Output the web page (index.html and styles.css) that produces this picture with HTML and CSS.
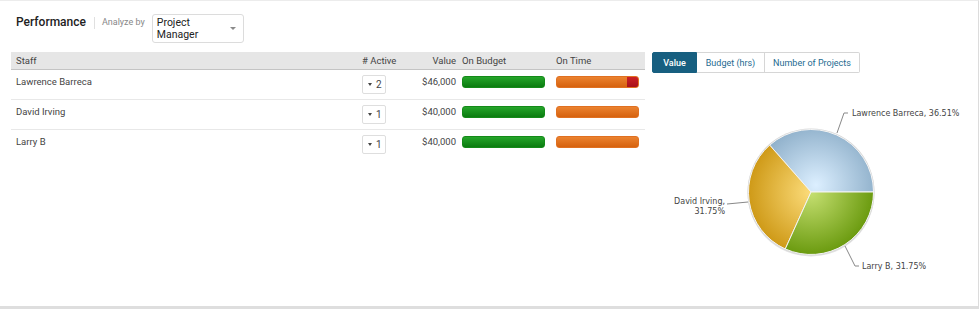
FILE: index.html
```html
<!DOCTYPE html>
<html>
<head>
<meta charset="utf-8">
<link rel="stylesheet" href="styles.css">
</head>
<body>
<div class="panel">
  <div class="head">
    <h1 class="title">Performance</h1>
    <span class="sep"></span>
    <span class="analyze">Analyze by</span>
    <div class="select">
      <span class="select-text">Project<br>Manager</span>
      <span class="caret"></span>
    </div>
  </div>
  <div class="content">
    <div class="grid">
      <div class="row hrow">
        <div class="cell c-staff">Staff</div>
        <div class="cell c-active">#&nbsp;Active</div>
        <div class="cell c-value">Value</div>
        <div class="cell c-bar">On Budget</div>
        <div class="cell c-bar">On Time</div>
      </div>
      <div class="row">
        <div class="cell c-staff">Lawrence Barreca</div>
        <div class="cell c-active"><span class="count"><span class="mini-caret"></span>2</span></div>
        <div class="cell c-value">$46,000</div>
        <div class="cell c-bar"><div class="bar green"></div></div>
        <div class="cell c-bar"><div class="bar orange"><div class="late" style="width:11px"></div></div></div>
      </div>
      <div class="row">
        <div class="cell c-staff">David Irving</div>
        <div class="cell c-active"><span class="count"><span class="mini-caret"></span>1</span></div>
        <div class="cell c-value">$40,000</div>
        <div class="cell c-bar"><div class="bar green"></div></div>
        <div class="cell c-bar"><div class="bar orange"></div></div>
      </div>
      <div class="row last">
        <div class="cell c-staff">Larry B</div>
        <div class="cell c-active"><span class="count"><span class="mini-caret"></span>1</span></div>
        <div class="cell c-value">$40,000</div>
        <div class="cell c-bar"><div class="bar green"></div></div>
        <div class="cell c-bar"><div class="bar orange"></div></div>
      </div>
    </div>
    <div class="chart">
      <div class="tabs">
        <span class="tab active">Value</span>
        <span class="tab">Budget (hrs)</span>
        <span class="tab">Number of Projects</span>
      </div>
      <svg class="pie" width="326" height="234" viewBox="0 0 326 234">
        <defs>
          <radialGradient id="gBlue" gradientUnits="userSpaceOnUse" cx="164" cy="112" r="66">
            <stop offset="0" stop-color="#dcefff"/>
            <stop offset="1" stop-color="#89abc6"/>
          </radialGradient>
          <radialGradient id="gYellow" gradientUnits="userSpaceOnUse" cx="159" cy="119" r="66">
            <stop offset="0" stop-color="#fcdc7a"/>
            <stop offset="1" stop-color="#cc9612"/>
          </radialGradient>
          <radialGradient id="gGreen" gradientUnits="userSpaceOnUse" cx="159" cy="119" r="66">
            <stop offset="0" stop-color="#c6e072"/>
            <stop offset="1" stop-color="#66970a"/>
          </radialGradient>
        </defs>
        <circle cx="159" cy="120" r="63.5" fill="#e4e4e4"/>
        <circle cx="159" cy="119" r="63.5" fill="#d6d6d6"/>
        <path d="M159,119 L221.5,119 A62.5,62.5 0 0 0 117.67,72.12 Z" fill="url(#gBlue)" stroke="#f4f4f4" stroke-width="1"/>
        <path d="M159,119 L117.67,72.12 A62.5,62.5 0 0 0 133.28,175.96 Z" fill="url(#gYellow)" stroke="#f4f4f4" stroke-width="1"/>
        <path d="M159,119 L133.28,175.96 A62.5,62.5 0 0 0 221.5,119 Z" fill="url(#gGreen)" stroke="#f4f4f4" stroke-width="1"/>
        <polyline points="185,60 192,40 196,40" fill="none" stroke="#888" stroke-width="1"/>
        <polyline points="75,131 96,129" fill="none" stroke="#888" stroke-width="1"/>
        <polyline points="193,173 203,193 207,193" fill="none" stroke="#888" stroke-width="1"/>
        <text class="lbl" x="200" y="43">Lawrence Barreca, 36.51%</text>
        <text class="lbl" x="73" y="131" text-anchor="end">David Irving,</text>
        <text class="lbl" x="73" y="141" text-anchor="end">31.75%</text>
        <text class="lbl" x="210" y="196">Larry B, 31.75%</text>
      </svg>
    </div>
  </div>
</div>
</body>
</html>
```
FILE: styles.css
```css
html, body {
  margin: 0;
  padding: 0;
  background: #ffffff;
}
body {
  font-family: Roboto, "Liberation Sans", Arial, sans-serif;
  color: #444;
  width: 980px;
  height: 309px;
  overflow: hidden;
}
.panel {
  box-sizing: border-box;
  width: 979px;
  height: 309px;
  border-top: 1px solid #ececec;
  border-right: 1px solid #dcdcdc;
  border-bottom: 3px solid #dedede;
  background: #fff;
}
.head {
  display: flex;
  align-items: flex-start;
  padding: 13px 0 0 16px;
  height: 38px;
  box-sizing: border-box;
}
.title {
  margin: 0;
  font-size: 12px;
  font-weight: 500;
  line-height: 16px;
  color: #222;
}
.sep {
  width: 1px;
  height: 12px;
  background: #e0e0e0;
  margin: 3px 7px 0 8px;
}
.analyze {
  font-size: 9px;
  color: #888;
  line-height: 16px;
  margin-right: 7px;
}
.select {
  display: flex;
  align-items: center;
  justify-content: space-between;
  box-sizing: border-box;
  width: 92px;
  height: 29px;
  border: 1px solid #dcdcdc;
  border-radius: 3px;
  padding: 0 7px 0 4px;
}
.select-text {
  font-size: 10.5px;
  line-height: 12px;
  color: #222;
}
.caret {
  width: 0;
  height: 0;
  border-left: 3.5px solid transparent;
  border-right: 3.5px solid transparent;
  border-top: 3.5px solid #8a8a8a;
}
.content {
  display: flex;
  align-items: flex-start;
  padding: 13px 0 0 11px;
}
.grid {
  width: 634px;
  font-size: 9.5px;
  display: flex;
  flex-direction: column;
}
.row {
  display: grid;
  grid-template-columns: 346px 50px 50px 94px 94px;
  box-sizing: border-box;
  height: 30px;
  border-bottom: 1px solid #e8e8e8;
  align-items: start;
}
.row.last { border-bottom: none; }
.row.hrow {
  height: 18px;
  background: #e6e6e6;
  border-bottom: 1px solid #c4c4c4;
  align-items: center;
}
.cell {
  padding-left: 5px;
  color: #444;
  line-height: 12px;
}
.row:not(.hrow) .c-staff,
.row:not(.hrow) .c-value {
  padding-top: 6px;
}
.c-value {
  text-align: right;
  padding-left: 0;
  padding-right: 1px;
}
.row:not(.hrow) .c-active { padding-top: 5px; }
.row:not(.hrow) .c-bar { padding-top: 6px; }
.count {
  display: flex;
  align-items: center;
  box-sizing: border-box;
  width: 24px;
  height: 19px;
  border: 1px solid #dedede;
  border-radius: 2px;
  font-size: 10px;
  color: #444;
  padding-left: 5px;
}
.mini-caret {
  width: 0;
  height: 0;
  border-left: 2.5px solid transparent;
  border-right: 2.5px solid transparent;
  border-top: 3px solid #444;
  margin-right: 4px;
}
.bar {
  box-sizing: border-box;
  width: 83px;
  height: 12px;
  border-radius: 3px;
  display: flex;
  justify-content: flex-end;
  overflow: hidden;
}
.green {
  background: linear-gradient(#25a52a, #0b7c10);
  border: 1px solid #148a18;
}
.orange {
  background: linear-gradient(#eb822f, #d6620f);
  border: 1px solid #e07020;
}
.late {
  height: 100%;
  background: linear-gradient(#cc2025, #a8101a);
}
.chart {
  margin-left: 7px;
  display: flex;
  flex-direction: column;
}
.tabs {
  display: flex;
  height: 21px;
}
.tab {
  box-sizing: border-box;
  display: flex;
  align-items: center;
  justify-content: center;
  height: 21px;
  font-size: 9px;
  color: #1d6a90;
  border: 1px solid #d6d6d6;
  border-left: none;
}
.tab:nth-child(2) { width: 68px; }
.tab:nth-child(3) { width: 95px; border-radius: 0 2px 2px 0; }
.tab.active {
  width: 45px;
  background: #175f80;
  border: 1px solid #175f80;
  color: #fff;
  font-weight: 500;
  border-radius: 2px 0 0 2px;
}
.pie {
  display: block;
}
.lbl {
  font-family: "DejaVu Sans", Verdana, sans-serif;
  font-size: 8px;
  fill: #444;
}
```
